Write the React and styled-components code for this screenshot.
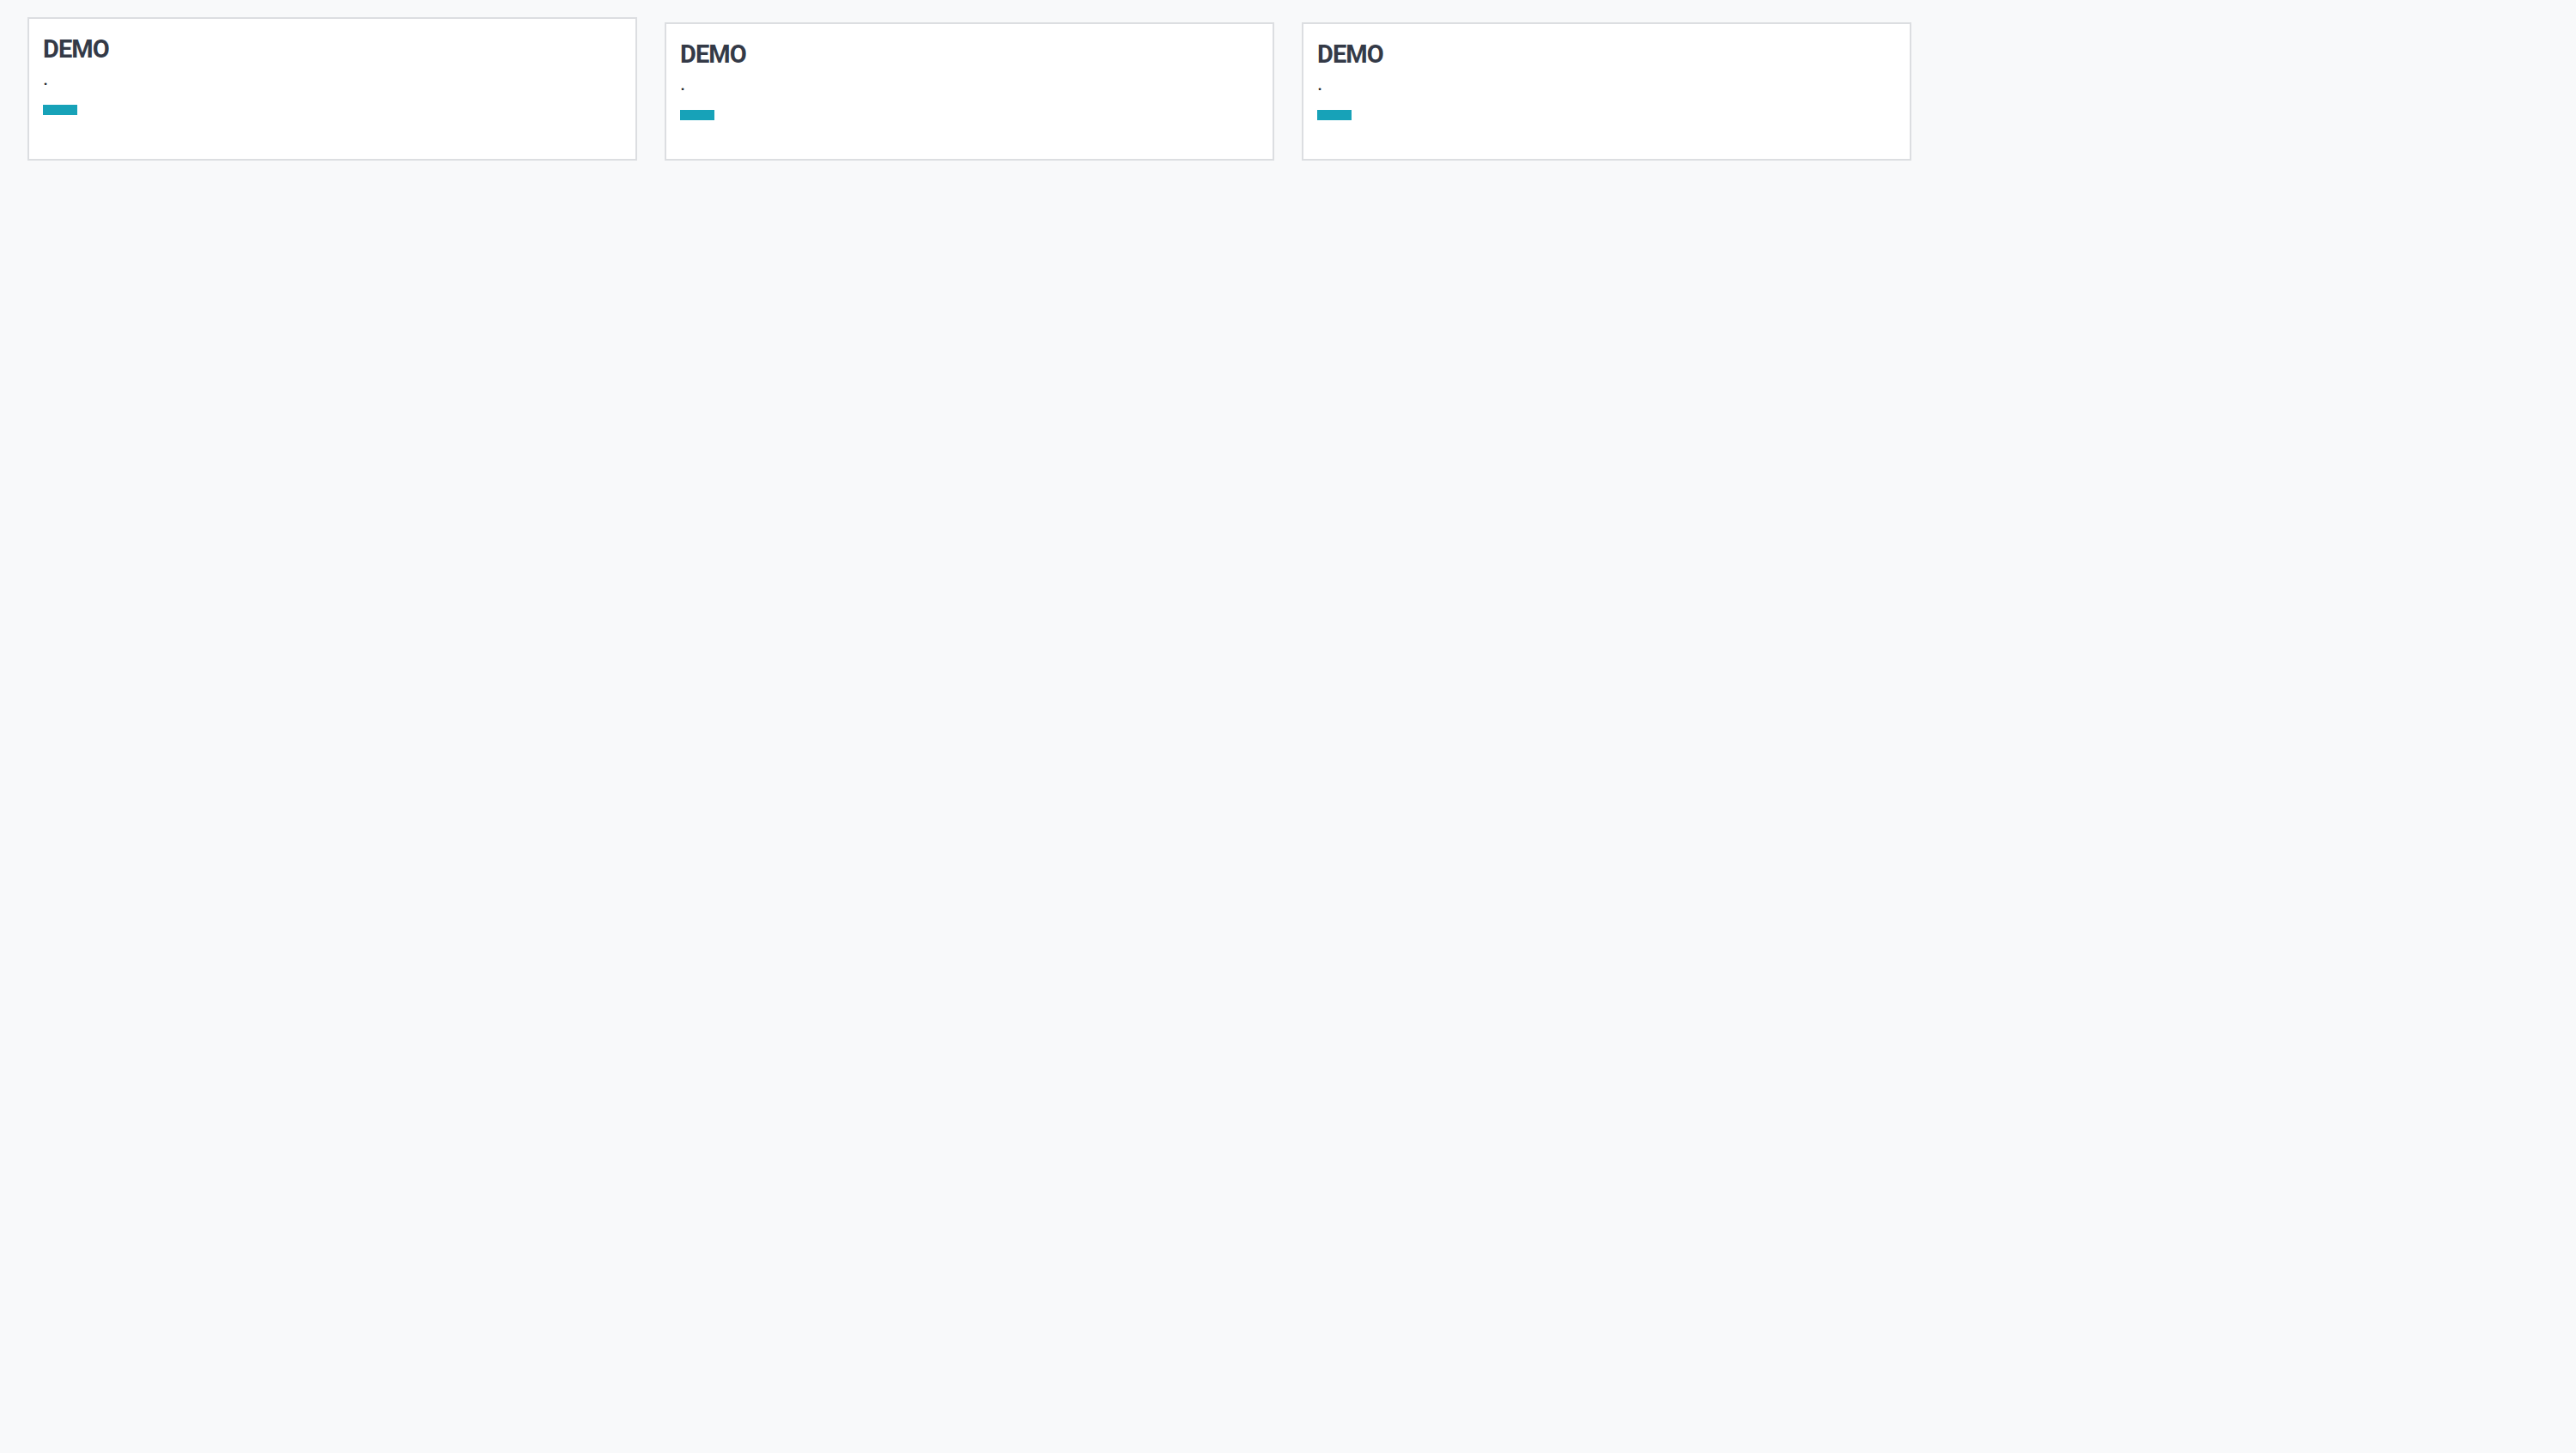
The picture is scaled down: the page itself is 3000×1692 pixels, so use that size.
import React from 'react'
import styled, { createGlobalStyle } from 'styled-components'

const GlobalStyle = createGlobalStyle`
  html, body {
    margin: 0;
    padding: 0;
    background: #f8f9fa;
    font-family: Roboto, "Liberation Sans", Arial, sans-serif;
    color: #212529;
  }
`;

// Styled components
const Page = styled.div`
  min-height: 1692px;
  box-sizing: border-box;
  padding: 20px 32px 32px;
  background: #f8f9fa;
`;

const Grid = styled.div`
  display: grid;
  grid-template-columns: repeat(4, 1fr);
  gap: 32px;
  align-items: end;
`;

const Card = styled.div`
  box-sizing: border-box;
  background: #ffffff;
  border: 2px solid #dcdee1;
  padding: 16px 16px ${props => (props.$tall ? '22px' : '16px')};
  display: flex;
  flex-direction: column;
  align-items: flex-start;
`;

const Title = styled.h5`
  margin: 0;
  font-size: 29px;
  line-height: 38px;
  font-weight: 700;
  letter-spacing: -0.9px;
  color: #343a47;
`;

const Text = styled.p`
  margin: 3px 0 0;
  font-size: 24px;
  line-height: 24px;
  color: #212529;
`;

const Bar = styled.span`
  display: block;
  width: 40px;
  height: 12px;
  margin: 19px 0 29px;
  background: #17a2b8;
`;

const items = [
  { id: 1, title: 'DEMO', text: '.', tall: true },
  { id: 2, title: 'DEMO', text: '.' },
  { id: 3, title: 'DEMO', text: '.' },
];

// Main component
const App = () => {
  return (
    <>
      <GlobalStyle />
      <Page>
        <Grid>
          {items.map(item => (
            <Card key={item.id} $tall={item.tall}>
              <Title>{item.title}</Title>
              <Text>{item.text}</Text>
              <Bar />
            </Card>
          ))}
        </Grid>
      </Page>
    </>
  );
};

export default App;
